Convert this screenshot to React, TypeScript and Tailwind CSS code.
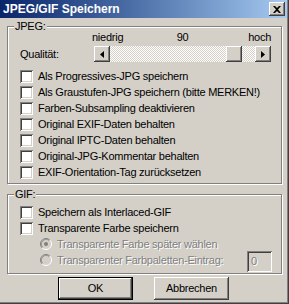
import React from "react";

const raised =
  "shadow-[inset_-1px_-1px_#404040,inset_1px_1px_#fff,inset_-2px_-2px_#808080,inset_2px_2px_#d4d0c8]";
const sunken =
  "shadow-[inset_1px_1px_#808080,inset_-1px_-1px_#fff,inset_2px_2px_#404040,inset_-2px_-2px_#d4d0c8]";
const disabledText = "text-[#808080] [text-shadow:1px_1px_0_#fff]";

function Checkbox({ label }: { label: string }) {
  return (
    <div className="flex h-[16px] items-start">
      <div className={`mt-[2px] h-[13px] w-[13px] shrink-0 bg-white ${sunken}`} />
      <span className="ml-[5px] leading-[16px] whitespace-nowrap">{label}</span>
    </div>
  );
}

function Radio({ checked }: { checked?: boolean }) {
  return (
    <svg width="12" height="12" viewBox="0 0 12 12" className="mt-[2px] shrink-0">
      <circle cx="6" cy="6" r="5.5" fill="#d4d0c8" />
      <path d="M2.11 9.89 A5.5 5.5 0 0 1 9.89 2.11" stroke="#808080" fill="none" />
      <path d="M9.89 2.11 A5.5 5.5 0 0 1 2.11 9.89" stroke="#fff" fill="none" />
      <path d="M2.82 9.18 A4.5 4.5 0 0 1 9.18 2.82" stroke="#404040" fill="none" opacity="0.35" />
      {checked && <circle cx="6" cy="6" r="2" fill="#808080" />}
    </svg>
  );
}

function GroupBox({
  label,
  className,
  children,
}: {
  label: string;
  className?: string;
  children: React.ReactNode;
}) {
  return (
    <div
      className={`relative mx-[7px] border border-[#808080] shadow-[inset_1px_1px_#fff,1px_1px_#fff] ${className ?? ""}`}
    >
      <span className="absolute -top-[7px] left-[6px] bg-[#d4d0c8] px-[1px] leading-[13px]">
        {label}
      </span>
      {children}
    </div>
  );
}

function ScrollButton({ dir }: { dir: "left" | "right" }) {
  return (
    <div className={`flex h-[16px] w-[16px] shrink-0 items-center justify-center bg-[#d4d0c8] ${raised}`}>
      <svg width="4" height="7" viewBox="0 0 4 7">
        {dir === "left" ? <path d="M4 0 L0 3.5 L4 7 Z" fill="#000" /> : <path d="M0 0 L4 3.5 L0 7 Z" fill="#000" />}
      </svg>
    </div>
  );
}

export default function App() {
  const jpegOptions = [
    "Als Progressives-JPG speichern",
    "Als Graustufen-JPG speichern (bitte MERKEN!)",
    "Farben-Subsampling deaktivieren",
    "Original EXIF-Daten behalten",
    "Original IPTC-Daten behalten",
    "Original-JPG-Kommentar behalten",
    "EXIF-Orientation-Tag zurücksetzen",
  ];

  return (
    <div
      className="relative h-[304px] w-[289px] overflow-hidden bg-[#d4d0c8] text-[11px] tracking-[-0.25px] text-black shadow-[inset_-1px_-1px_#404040,inset_-2px_-2px_#808080]"
      style={{ fontFamily: '"Liberation Sans", Arial, sans-serif' }}
    >
      {/* Title bar */}
      <div className="mr-[2px] flex h-[18px] items-center justify-between bg-gradient-to-r from-[#0a246a] to-[#a6caf0] pl-[3px] pr-[2px]">
        <span className="text-[12px] font-bold leading-[14px] tracking-normal text-white">JPEG/GIF Speichern</span>
        <div className={`flex h-[14px] w-[16px] items-center justify-center bg-[#d4d0c8] ${raised}`}>
          <svg width="8" height="7" viewBox="0 0 8 7">
            <path d="M0 0h2l2 2 2-2h2L5 3.5 8 7H6L4 5 2 7H0l3-3.5z" fill="#000" />
          </svg>
        </div>
      </div>

      {/* JPEG */}
      <GroupBox label="JPEG:" className="mt-[8px] h-[158px]">
        <div className="ml-[86px] mt-[4px] grid w-[177px] grid-cols-3 leading-[13px]">
          <span className="-ml-[2px]">niedrig</span>
          <span className="text-center">90</span>
          <span className="text-right">hoch</span>
        </div>
        <div className="mt-[2px] flex h-[16px] items-center">
          <span className="ml-[12px] w-[74px]">Qualität:</span>
          <div className="flex w-[177px]">
            <ScrollButton dir="left" />
            <div className="flex flex-1 bg-[repeating-conic-gradient(#fff_0%_25%,#d4d0c8_0%_50%)] bg-[length:2px_2px]">
              <div className={`ml-[116px] h-[16px] w-[16px] bg-[#d4d0c8] ${raised}`} />
            </div>
            <ScrollButton dir="right" />
          </div>
        </div>
        <div className="ml-[12px] mt-[6px] flex flex-col">
          {jpegOptions.map((o) => (
            <Checkbox key={o} label={o} />
          ))}
        </div>
      </GroupBox>

      {/* GIF */}
      <GroupBox label="GIF:" className="mt-[10px] h-[80px]">
        <div className="ml-[12px] mt-[9px] flex flex-col">
          <Checkbox label="Speichern als Interlaced-GIF" />
          <Checkbox label="Transparente Farbe speichern" />
          <div className="ml-[20px] flex h-[16px] items-start">
            <Radio checked />
            <span className={`ml-[5px] leading-[16px] ${disabledText}`}>Transparente Farbe später wählen</span>
          </div>
          <div className="ml-[20px] flex h-[16px] items-start">
            <Radio />
            <span className={`ml-[5px] leading-[16px] ${disabledText}`}>Transparenter Farbpaletten-Eintrag:</span>
            <div
              className={`ml-auto mr-[9px] -mt-[1px] flex h-[21px] w-[25px] items-center bg-[#d4d0c8] pl-[4px] ${sunken} ${disabledText}`}
            >
              0
            </div>
          </div>
        </div>
      </GroupBox>

      {/* Buttons */}
      <div className="mt-[3px] flex justify-center gap-[21px] pr-[2px]">
        <div className="flex h-[23px] w-[75px] items-center justify-center border border-black bg-[#d4d0c8]">
          <div className={`flex h-full w-full items-center justify-center ${raised}`}>OK</div>
        </div>
        <div className={`flex h-[23px] w-[75px] items-center justify-center bg-[#d4d0c8] ${raised}`}>Abbrechen</div>
      </div>
    </div>
  );
}
